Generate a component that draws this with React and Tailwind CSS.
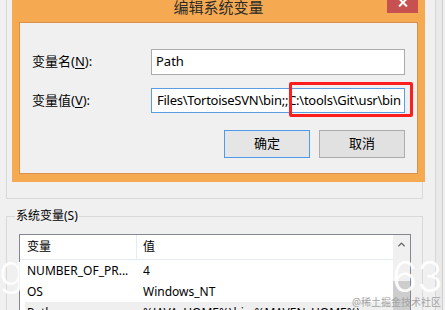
import { ChevronUp } from 'lucide-react';

const rows = [
  { name: 'NUMBER_OF_PR...', value: '4' },
  { name: 'OS', value: 'Windows_NT' },
  { name: 'Path', value: '%JAVA_HOME%\\bin;%MAVEN_HOME%\\...', selected: true },
];

export default function App() {
  return (
    <div className="relative w-[445px] h-[310px] overflow-hidden bg-[#f0f0f0] flex text-[#000] font-['Noto_Sans','Noto_Sans_CJK_SC',sans-serif]">
      {/* 背景窗口：环境变量 */}
      <div className="w-[435px] flex flex-col pl-[6px]">
        <div className="w-[417px] h-[199px] shrink-0 border-x border-b border-[#d9d9d9]" />

        <div className="relative mt-[17px] w-[417px] flex-1 border-x border-t border-[#d9d9d9] pt-[17px] pl-[12px]">
          <span className="absolute left-[8px] top-[-10px] px-[1px] bg-[#f0f0f0] text-[12px] leading-[18px]">
            系统变量(S)
          </span>

          <div className="w-[392px] h-[80px] flex border border-[#828790] bg-white">
            <div className="w-[373px] flex flex-col">
              <div className="h-[25px] shrink-0 flex border-b border-[#e3ecf7] text-[12px]">
                <div className="w-[117px] flex items-center pl-[7px] border-r border-[#e3ecf7]">变量</div>
                <div className="flex-1 flex items-center pl-[6px]">值</div>
              </div>
              {rows.map((r) => (
                <div
                  key={r.name}
                  className={`h-[21px] shrink-0 flex text-[12px] whitespace-nowrap ${r.selected ? 'ml-[5px] bg-[#efefef]' : ''}`}
                >
                  <div className={`${r.selected ? 'w-[112px] pl-[2px]' : 'w-[117px] pl-[7px]'} flex items-center`}>{r.name}</div>
                  <div className="flex-1 flex items-center pl-[6px]">{r.value}</div>
                </div>
              ))}
            </div>
            <div className="w-[17px] flex flex-col bg-[#f0f0f0]">
              <div className="h-[17px] flex items-center justify-center mt-[1px]">
                <ChevronUp size={11} strokeWidth={3} className="text-[#606060]" />
              </div>
              <div className="mt-[28px] flex-1 bg-[#cdcdcd]" />
            </div>
          </div>
        </div>
      </div>
      <div className="w-px bg-[#d6d6d6]" />
      <div className="w-[6px] bg-[#e9e9e9]" />
      <div className="w-px bg-[#d0d0d0]" />

      {/* 编辑系统变量 对话框 */}
      <div className="absolute left-[12px] top-[-8px] w-[413px] h-[190px] bg-[#f5aa51] flex flex-col px-[7px] pb-[8px]">
        <div className="relative h-[30px] shrink-0 flex items-center justify-center">
          <span className="text-[15px] text-[#2b2b2b] leading-none mt-[1px]">编辑系统变量</span>
          <div className="absolute right-0 top-0 w-[31px] h-[21px] bg-[#c75050] flex items-center justify-center">
            <svg width="10" height="9" viewBox="0 0 10 9">
              <path d="M1 0.5 L9 8.5 M9 0.5 L1 8.5" stroke="#fff" strokeWidth="2" />
            </svg>
          </div>
        </div>

        <div className="flex-1 bg-[#f0f0f0] border border-[#d7914a] flex flex-col text-[13px]">
          <div className="mt-[26px] grid grid-cols-[131px_254px] items-center">
            <div className="pl-[12px]">
              变量名(<span className="underline underline-offset-2">N</span>):
            </div>
            <div className="h-[26px] border border-[#ababab] bg-white flex items-center pl-[4px]">Path</div>
          </div>
          <div className="mt-[13px] grid grid-cols-[131px_254px] items-center">
            <div className="pl-[12px]">
              变量值(<span className="underline underline-offset-2">V</span>):
            </div>
            <div className="h-[25px] border border-[#5a9de2] bg-white flex items-center pl-[5px] overflow-hidden whitespace-nowrap tracking-[-0.25px]">
              Files\TortoiseSVN\bin;;C:\tools\Git\usr\bin
            </div>
          </div>
          <div className="mt-[17px] flex justify-end gap-[9px] pr-[12px]">
            <button className="w-[86px] h-[28px] border border-[#4d9be6] bg-[#e5e5e5] text-[13px]">确定</button>
            <button className="w-[86px] h-[28px] border border-[#acacac] bg-[#e1e1e1] text-[13px]">取消</button>
          </div>
        </div>
      </div>

      {/* 标注框 */}
      <div className="absolute left-[289px] top-[82px] w-[124px] h-[35px] border-[3px] border-[#ff1e1e] rounded-[2px]" />

      {/* 水印 */}
      <span className="absolute left-[-1px] top-[249px] text-[42px] leading-none font-light text-white/90 font-['Inter',sans-serif]">g</span>
      <span className="absolute left-[392px] top-[256px] text-[42px] leading-none font-light text-white/90 font-['Inter',sans-serif]">63</span>
      <span className="absolute right-[4px] bottom-[3px] text-[10px] leading-none text-[#a3a3a3]">@稀土掘金技术社区</span>
    </div>
  );
}
